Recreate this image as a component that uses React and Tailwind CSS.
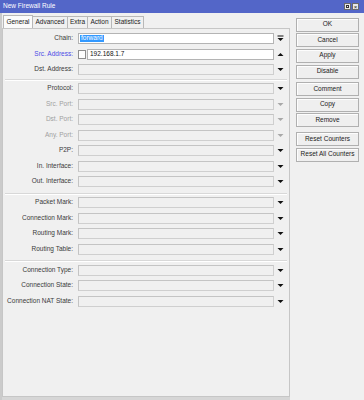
import React from 'react';

const font = "font-['Liberation_Sans',Arial,sans-serif]";

function Arrow({ kind = 'down', dim = false }) {
  const c = dim ? '#a8a8a8' : '#111';
  if (kind === 'up') {
    return (
      <svg width="7" height="5" viewBox="0 0 7 5"><path d="M0.5 4 L3.5 1 L6.5 4 Z" fill={c} /></svg>
    );
  }
  if (kind === 'bar') {
    return (
      <svg width="7" height="7" viewBox="0 0 7 7">
        <rect x="0.5" y="0.5" width="6" height="1" fill={c} />
        <path d="M0.5 3 L6.5 3 L3.5 6 Z" fill={c} />
      </svg>
    );
  }
  return (
    <svg width="7" height="5" viewBox="0 0 7 5"><path d="M0.5 1 L6.5 1 L3.5 4 Z" fill={c} /></svg>
  );
}

function Row({ label, tone = 'normal', arrow = 'down', children, first }) {
  let labelClass = 'text-[#3a3a3a]';
  if (tone === 'dim') labelClass = 'text-[#a0a0a0]';
  if (tone === 'blue') labelClass = 'text-[#4b4be6]';
  return (
    <div className={'flex items-center h-[11px] ' + (first ? 'mt-[4px]' : 'mt-[4.5px]')}>
      <div className={'w-[70px] text-right text-[6.5px] leading-none whitespace-nowrap ' + labelClass}>{label}</div>
      <div className="ml-[5px] w-[196px] h-full flex">
        {children || (
          <div className="flex-1 h-full bg-[#f0f0f0] border border-[#cfcfcf] border-t-[#c4c4c4] border-l-[#c4c4c4]" />
        )}
      </div>
      <div className="w-[12px] flex justify-center">
        <Arrow kind={arrow} dim={tone === 'dim'} />
      </div>
    </div>
  );
}

function Sep({ space }) {
  return <div className={'ml-[2px] w-[282px] h-[2px] border-t border-[#d8d8d8] border-b border-b-white ' + space} />;
}

function Btn({ children, mt }) {
  return (
    <div className={'w-[63px] h-[14px] flex items-center justify-center border border-[#b0b0b0] bg-[#efefef] shadow-[inset_1px_1px_0_#fdfdfd] text-[6.5px] text-[#222] leading-none whitespace-nowrap ' + mt}>
      {children}
    </div>
  );
}

const tabs = [
  { name: 'General', w: 'w-[30px]' },
  { name: 'Advanced', w: 'w-[36px]' },
  { name: 'Extra', w: 'w-[21px]' },
  { name: 'Action', w: 'w-[25px]' },
  { name: 'Statistics', w: 'w-[33px]' },
];

export default function App() {
  return (
    <div className={'w-[364px] h-[400px] bg-[#f0f0f0] flex flex-col overflow-hidden ' + font}>
      {/* title bar */}
      <div className="h-[13px] bg-[#5366c8] flex items-center justify-between px-[3px]">
        <span className="text-white text-[6.5px] leading-none">New Firewall Rule</span>
        <div className="flex gap-[1px] mr-[2px]">
          <div className="w-[7px] h-[7px] bg-[#e8e8e8] border border-[#6a6a6a] flex items-center justify-center">
            <div className="w-[3px] h-[3px] border border-[#333]" />
          </div>
          <div className="w-[7px] h-[7px] bg-[#e8e8e8] border border-[#6a6a6a] flex items-center justify-center text-[6px] leading-none text-[#222]">×</div>
        </div>
      </div>

      <div className="flex flex-1 border-l-2 border-[#cbcbcb]">
        {/* left side */}
        <div className="w-[288px] flex flex-col">
          <div className="h-[15px] flex items-end pl-[1px]">
            {tabs.map((t, i) => (
              <div
                key={t.name}
                className={
                  t.w + ' flex items-center justify-center text-[6.5px] leading-none text-[#222] border border-b-0 border-[#b8b8b8] ' +
                  (i === 0 ? 'h-[13px] bg-[#fbfbfb]' : 'h-[12px] bg-[#f0f0f0] -ml-[1px]')
                }
              >
                {t.name}
              </div>
            ))}
          </div>
          <div className="flex-1 border border-[#c6c6c6] bg-[#f0f0f0] flex flex-col">
            <Row label="Chain:" arrow="bar" first>
              <div className="flex-1 h-full bg-white border border-[#b4b4b4] flex items-center pl-[1px]">
                <span className="bg-[#3399ff] text-white text-[6.5px] leading-none px-[1px] py-[0.5px]">forward</span>
              </div>
            </Row>
            <Row label="Src. Address:" tone="blue" arrow="up">
              <div className="w-[8px] h-[9px] self-center bg-white border border-[#8f8f8f]" />
              <div className="ml-[1px] flex-1 h-full bg-white border border-[#b4b4b4] flex items-center pl-[2px] text-[6.5px] leading-none text-[#111]">
                192.168.1.7
              </div>
            </Row>
            <Row label="Dst. Address:" />
            <Sep space="mt-[4px] mb-[-2.5px]" />
            <Row label="Protocol:" />
            <Row label="Src. Port:" tone="dim" />
            <Row label="Dst. Port:" tone="dim" />
            <Row label="Any. Port:" tone="dim" />
            <Row label="P2P:" />
            <Row label="In. Interface:" />
            <Row label="Out. Interface:" />
            <Sep space="mt-[5.5px] mb-[-2px]" />
            <Row label="Packet Mark:" />
            <Row label="Connection Mark:" />
            <Row label="Routing Mark:" />
            <Row label="Routing Table:" />
            <Sep space="mt-[5px] mb-[-1.5px]" />
            <Row label="Connection Type:" />
            <Row label="Connection State:" />
            <Row label="Connection NAT State:" />
          </div>
          <div className="h-[3px] bg-[#d6d6d6]" />
        </div>

        {/* right buttons */}
        <div className="flex-1 flex flex-col pl-[6px]">
          <Btn mt="mt-[4.5px]">OK</Btn>
          <Btn mt="mt-[1.5px]">Cancel</Btn>
          <Btn mt="mt-[1.5px]">Apply</Btn>
          <Btn mt="mt-[2px]">Disable</Btn>
          <Btn mt="mt-[3.5px]">Comment</Btn>
          <Btn mt="mt-[1.5px]">Copy</Btn>
          <Btn mt="mt-[1.5px]">Remove</Btn>
          <Btn mt="mt-[5px]">Reset Counters</Btn>
          <Btn mt="mt-[1.5px]">Reset All Counters</Btn>
        </div>
      </div>
    </div>
  );
}
